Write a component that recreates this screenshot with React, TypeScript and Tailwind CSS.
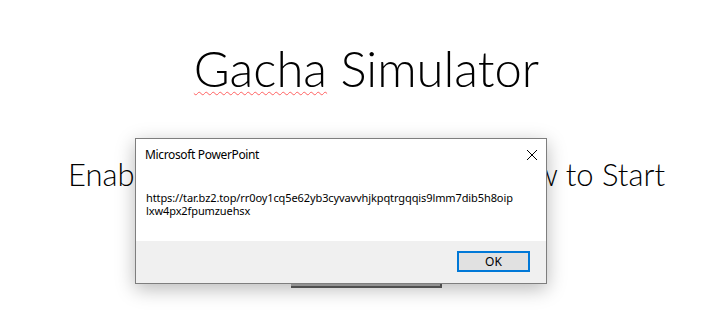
import React from "react";

export default function App() {
  return (
    <div className="relative w-[702px] h-[335px] bg-white overflow-hidden">
      {/* Slide content */}
      <div className="flex flex-col items-center pl-[31px] pt-[40px]" style={{ fontFamily: "Lato, 'Open Sans', sans-serif" }}>
        <div className="relative text-[49px] leading-[56px] font-light text-black">
          <span className="underline decoration-wavy decoration-[#ff6060] decoration-[1px] underline-offset-[4px]">Gacha</span> Simulator
        </div>
        <div className="mt-[58px] w-[597px] flex justify-between text-[31px] leading-[40px] font-light text-black whitespace-nowrap">
          <span>Enable Macros</span>
          <span>and Scroll Below to Start</span>
        </div>
        <div className="mt-[54px] w-[151px] h-[40px] bg-[#b4b4b4] border-b-2 border-r-2 border-[#5f5f5f]" />
      </div>

      {/* Dialog */}
      <div
        className="absolute left-[135px] top-[138px] w-[412px] h-[146px] flex flex-col bg-white border border-[#7e7e7e] shadow-[0_5px_18px_rgba(0,0,0,0.28)]"
        style={{ fontFamily: "'Noto Sans', 'Open Sans', sans-serif" }}
      >
        <div className="flex-1 bg-white flex flex-col">
          <div className="flex items-center justify-between h-[30px] pl-[9px] pr-[8px] pt-[2px]">
            <span className="text-[12px] text-black tracking-[-0.35px]">Microsoft PowerPoint</span>
            <svg width="12" height="12" viewBox="0 0 12 12">
              <path d="M1 1 L11 11 M11 1 L1 11" stroke="#000" strokeWidth="1" />
            </svg>
          </div>
          <div className="pl-[10px] pt-[22px] text-[11px] leading-[13px] text-black tracking-[-0.1px]">
            https://tar.bz2.top/rr0oy1cq5e62yb3cyvavvhjkpqtrgqqis9lmm7dib5h8oip
            <br />
            lxw4px2fpumzuehsx
          </div>
        </div>
        <div className="h-[42px] bg-[#f0f0f0] flex items-start justify-end pr-[16px] pt-[10px]">
          <div className="w-[73px] h-[21px] border-2 border-[#0078d7] bg-[#e1e1e1] flex items-center justify-center text-[12px] text-black">
            OK
          </div>
        </div>
      </div>
    </div>
  );
}
